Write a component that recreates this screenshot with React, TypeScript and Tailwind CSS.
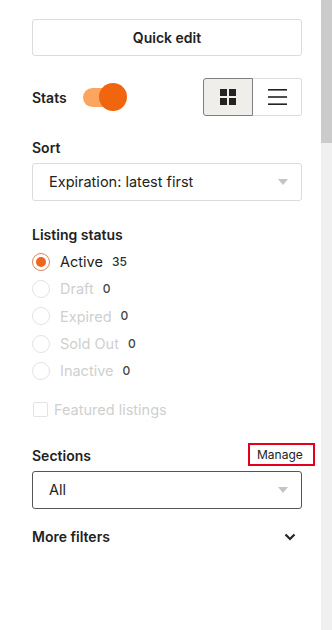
import React from "react";

const font = { fontFamily: "Inter, 'Noto Sans', sans-serif" };

function Caret() {
  return (
    <svg width="10" height="6" viewBox="0 0 10 6" className="shrink-0">
      <path d="M0 0 L10 0 L5 6 Z" fill="#c4c4c4" />
    </svg>
  );
}

function Radio({ label, count, active }: { label: string; count: string; active?: boolean }) {
  return (
    <div className="flex items-center h-[27.4px]">
      {active ? (
        <span className="w-[18px] h-[18px] rounded-full border-[1.5px] border-[#d9875a] flex items-center justify-center">
          <span className="w-[10px] h-[10px] rounded-full bg-[#f1641e]" />
        </span>
      ) : (
        <span className="w-[18px] h-[18px] rounded-full border border-[#e3e3e3]" />
      )}
      <span className={`ml-[10px] text-[14.5px] ${active ? "text-[#222]" : "text-[#cfcfcf]"}`}>{label}</span>
      <span className={`ml-[9px] text-[12px] font-medium ${active ? "text-[#333]" : "text-[#444]"}`}>{count}</span>
    </div>
  );
}

export default function App() {
  return (
    <div className="flex w-[332px] h-[630px] bg-white overflow-hidden" style={font}>
      <div className="w-[321px] pl-[32px] pr-[19px] pt-[19px] text-[#222]">
        <button className="w-full h-[37px] border border-[#dcdcdc] rounded-[3px] text-[14px] font-semibold text-[#222] flex items-center justify-center">
          Quick edit
        </button>

        <div className="mt-[22px] flex items-center justify-between h-[38px]">
          <div className="flex items-center">
            <span className="text-[14px] font-semibold">Stats</span>
            <div className="ml-[16px] relative w-[44px] h-[28px] flex items-center">
              <span className="w-[34px] h-[19px] rounded-full bg-[#fca55f]" />
              <span className="absolute right-0 top-0 w-[28px] h-[28px] rounded-full bg-[#f1650e]" />
            </div>
          </div>
          <div className="flex h-[38px]">
            <div className="w-[50px] h-full bg-[#efeeea] border border-[#7f7f7f] rounded-l-[3px] flex items-center justify-center">
              <svg width="16" height="16" viewBox="0 0 16 16">
                <rect x="0" y="0" width="7" height="7" fill="#222" />
                <rect x="9" y="0" width="7" height="7" fill="#222" />
                <rect x="0" y="9" width="7" height="7" fill="#222" />
                <rect x="9" y="9" width="7" height="7" fill="#222" />
              </svg>
            </div>
            <div className="w-[49px] h-full bg-white border border-l-0 border-[#dcdcdc] rounded-r-[3px] flex items-center justify-center">
              <svg width="19" height="16" viewBox="0 0 19 16">
                <rect x="0" y="0" width="19" height="1.6" fill="#222" />
                <rect x="0" y="7.2" width="19" height="1.6" fill="#222" />
                <rect x="0" y="14.4" width="19" height="1.6" fill="#222" />
              </svg>
            </div>
          </div>
        </div>

        <div className="mt-[22px] text-[14px] font-semibold h-[20px] leading-[20px]">Sort</div>
        <div className="mt-[5px] h-[38px] border border-[#dcdcdc] rounded-[3px] flex items-center justify-between pl-[16px] pr-[13px]">
          <span className="text-[14.5px] text-[#222]">Expiration: latest first</span>
          <Caret />
        </div>

        <div className="mt-[24px] text-[14px] font-semibold h-[20px] leading-[20px]">Listing status</div>
        <div className="mt-[3px] flex flex-col">
          <Radio label="Active" count="35" active />
          <Radio label="Draft" count="0" />
          <Radio label="Expired" count="0" />
          <Radio label="Sold Out" count="0" />
          <Radio label="Inactive" count="0" />
        </div>

        <div className="mt-[13px] flex items-center h-[24px]">
          <span className="ml-[1px] w-[15px] h-[15px] border border-[#e3e3e3] rounded-[2px]" />
          <span className="ml-[6px] text-[14.5px] text-[#cfcfcf]">Featured listings</span>
        </div>

        <div className="mt-[20px] flex items-end justify-between h-[24px]">
          <span className="text-[14px] font-semibold leading-[20px]">Sections</span>
          <span className="mr-[-13px] w-[67px] h-[23px] border-2 border-[#e2001a] flex items-end pl-[7px] pb-[1px] text-[12px] text-[#222] leading-[16px]">
            Manage
          </span>
        </div>
        <div className="mt-[5px] h-[38px] border border-[#555] rounded-[3px] flex items-center justify-between pl-[16px] pr-[13px]">
          <span className="text-[14.5px] text-[#222]">All</span>
          <Caret />
        </div>

        <div className="mt-[18px] flex items-center justify-between h-[20px]">
          <span className="text-[14px] font-semibold">More filters</span>
          <svg width="12" height="8" viewBox="0 0 12 8" className="mr-[6px]">
            <path d="M1.5 1.5 L6 6 L10.5 1.5" fill="none" stroke="#222" strokeWidth="2.2" />
          </svg>
        </div>
      </div>
      <div className="w-[11px] h-full bg-[#f0f0f0] flex flex-col">
        <div className="h-[143px] bg-[#cbcbcb]" />
      </div>
    </div>
  );
}
